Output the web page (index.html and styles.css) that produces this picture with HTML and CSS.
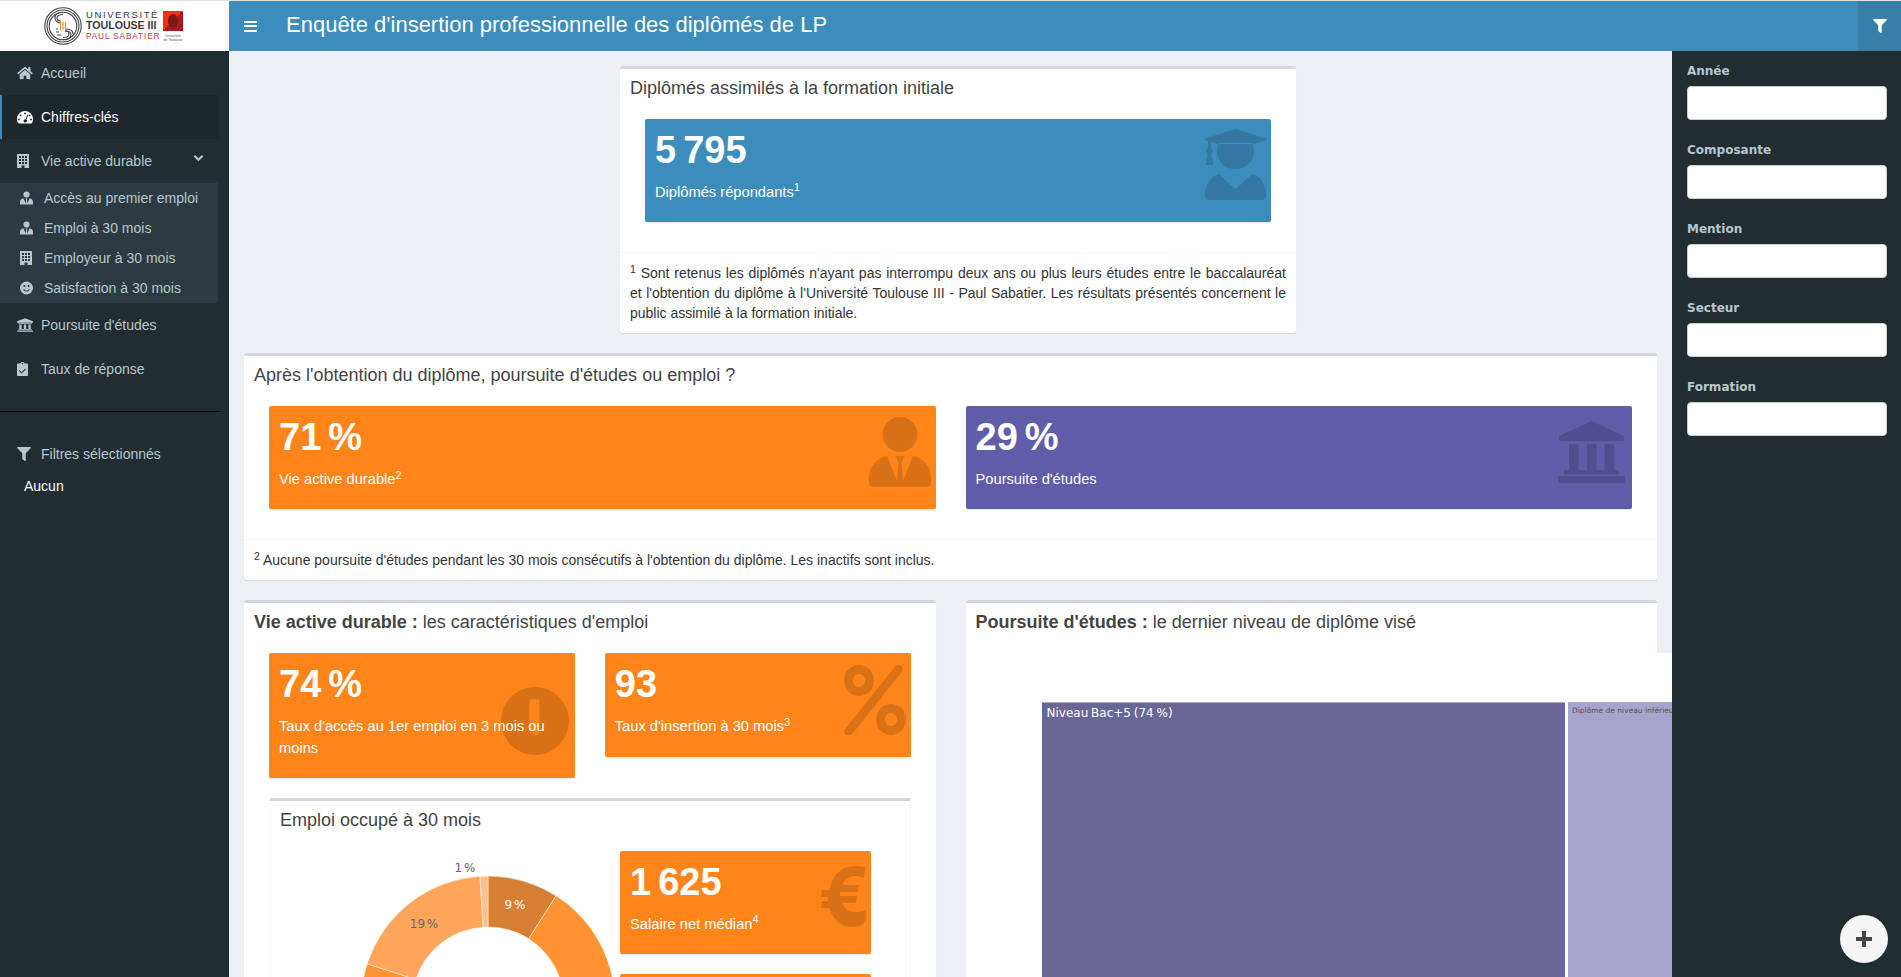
FILE: index.html
```html
<!DOCTYPE html>
<html lang="fr">
<head>
<meta charset="utf-8">
<title>Enquête d'insertion professionnelle</title>
<link rel="stylesheet" href="styles.css">
</head>
<body>
<svg class="defs" width="0" height="0" aria-hidden="true">
  <defs>
    <symbol id="i-home" viewBox="0 0 576 512"><path d="M280.37 148.26L96 300.11V464a16 16 0 0 0 16 16l112.06-.29a16 16 0 0 0 15.92-16V368a16 16 0 0 1 16-16h64a16 16 0 0 1 16 16v95.64a16 16 0 0 0 16 16.05L464 480a16 16 0 0 0 16-16V300L295.67 148.26a12.19 12.19 0 0 0-15.3 0zM571.6 251.47L488 182.56V44.05a12 12 0 0 0-12-12h-56a12 12 0 0 0-12 12v72.61L318.47 43a48 48 0 0 0-61 0L4.34 251.47a12 12 0 0 0-1.6 16.9l25.5 31A12 12 0 0 0 45.15 301l235.22-193.74a12.19 12.19 0 0 1 15.3 0L530.9 301a12 12 0 0 0 16.9-1.6l25.5-31a12 12 0 0 0-1.7-16.93z"/></symbol>
    <symbol id="i-filter" viewBox="0 0 512 512" preserveAspectRatio="xMinYMid"><path d="M487.976 0H24.028C2.71 0-8.047 25.866 7.058 40.971L192 225.941V432c0 7.831 3.821 15.17 10.237 19.662l80 55.98C298.02 518.69 320 507.493 320 487.98V225.941l184.947-184.97C520.021 25.896 509.338 0 487.976 0z"/></symbol>
    <symbol id="i-gauge" viewBox="0 0 16 14"><path fill-rule="evenodd" d="M8 1a8 8 0 0 0-8 8c0 1.6.4 3 1.2 4 .2.3.5.4.8.4h12c.3 0 .6-.1.8-.4.8-1 1.2-2.4 1.2-4a8 8 0 0 0-8-8zM8 2.600a.9.9 0 1 1 0 1.800.9.9 0 0 1 0-1.800zM3.500 4.500a.9.9 0 1 1 0 1.800.9.9 0 0 1 0-1.800zM12.500 4.500a.9.9 0 1 1 0 1.800.9.9 0 0 1 0-1.800zM2 8.500a.9.9 0 1 1 0 1.800.9.9 0 0 1 0-1.800zM14 8.500a.9.9 0 1 1 0 1.800.9.9 0 0 1 0-1.800zM10.400 4.700l.9.400-1.900 4.500a1.700 1.700 0 1 1-.9-.400z"/></symbol>
    <symbol id="i-building" viewBox="0 0 12 14" preserveAspectRatio="xMinYMid"><path fill-rule="evenodd" d="M0 0h12v14H7.500v-2.500h-3V14H0zM2 2v2h2V2zM5 2v2h2V2zM8 2v2h2V2zM2 5v2h2V5zM5 5v2h2V5zM8 5v2h2V5zM2 8v2h2V8zM5 8v2h2V8zM8 8v2h2V8z"/></symbol>
    <symbol id="i-tie" viewBox="0 0 14 14"><circle cx="7" cy="3.300" r="3.300"/><path d="M0 14v-3c0-2 1.500-3.300 3.600-3.700L6.300 13l.2-4-.6-1.500h2.200L7.500 9l.2 4 2.700-5.700C12.500 7.700 14 9 14 11v3z"/></symbol>
    <symbol id="i-smile" viewBox="0 0 14 14"><path fill-rule="evenodd" d="M7 0a7 7 0 1 1 0 14A7 7 0 0 1 7 0zM4.700 3.800a1.100 1.100 0 1 0 0 2.200 1.100 1.100 0 0 0 0-2.200zM9.300 3.800a1.100 1.100 0 1 0 0 2.200 1.100 1.100 0 0 0 0-2.200zM3.500 8.300c.6 1.600 2 2.500 3.500 2.500s2.900-.9 3.500-2.500l-1-.3c-.5 1.100-1.400 1.800-2.500 1.800S5 9.100 4.500 8z"/></symbol>
    <symbol id="i-bank" viewBox="0 0 14 12" preserveAspectRatio="xMinYMid"><path d="M7 0l7 2.800V4H0V2.800zM1 4.400h12v.8H1zM2 5.600h2v3.800H2zM6 5.600h2v3.800H6zM10 5.600h2v3.800h-2zM1 9.800h12v.8H1zM0 11h14v1H0z"/></symbol>
    <symbol id="i-clip" viewBox="0 0 11 14" preserveAspectRatio="xMinYMid"><path fill-rule="evenodd" d="M1 1.500h2.200C3.500.6 4.400 0 5.500 0s2 .6 2.300 1.500H10c.6 0 1 .4 1 1V13c0 .6-.4 1-1 1H1c-.6 0-1-.4-1-1V2.500c0-.6.4-1 1-1zM5.500 1a.8.8 0 1 0 0 1.600.8.8 0 0 0 0-1.600zM8.300 6.500L4.600 10.200 2.700 8.300l-.7.7 2.600 2.600L9 7.200z"/></symbol>
    <symbol id="i-grad" viewBox="0 0 61 71"><path d="M30.500 0L61 9.500v2L48 15V14H13v1l-7-1.800V19c1.300.5 2 1.600 2 2.800 0 1.200-.7 2.300-1.700 2.800L8.500 36h-8l2.200-11.400C1.700 24.100 1 23 1 21.800c0-1.200.7-2.300 2-2.800v-6.800L0 11.500v-2z"/><path d="M13 15h35c.5 2.500.8 5 .8 8 0 9-7 17-18.300 17S12.200 32 12.200 23c0-3 .3-5.500.8-8z"/><path d="M0 66c0-11 6-19 14-21l16.500 15.500L47 45c8 2 14 10 14 21v1c0 2.500-1.500 4-4 4H4c-2.500 0-4-1.500-4-4z"/></symbol>
    <symbol id="i-person" viewBox="0 0 62 70"><ellipse cx="31" cy="17.500" rx="17.500" ry="17.500"/><path d="M18 39l10 25 1.500-18-3-7h9l-3 7L34 64l10-25c10 2 18 10 18 22v5c0 2.500-1.500 4-4 4H4c-2.500 0-4-1.500-4-4v-5c0-12 8-20 18-22z"/></symbol>
    <symbol id="i-bank-lg" viewBox="0 0 67 62"><path d="M33.500 0L66 15v3c0 1-.8 2-1.800 2H2.800c-1 0-1.800-1-1.800-2v-3zM11 23h9.500v26H11zM29 23h9.500v26H29zM46.500 23H56v26h-9.500zM6 49h55v4.500H6zM0 55h67v7H0z"/></symbol>
    <symbol id="i-percent" viewBox="0 0 62 70"><path fill-rule="evenodd" d="M15 0c8.500 0 15 7 15 15.500S23.500 31 15 31 0 24 0 15.500 6.500 0 15 0zM15 9c-3.300 0-6 2.900-6 6.500S11.700 22 15 22s6-2.900 6-6.500S18.300 9 15 9zM47 39c8.500 0 15 7 15 15.500S55.500 70 47 70s-15-7-15-15.500S38.500 39 47 39zM47 48c-3.300 0-6 2.900-6 6.500S43.700 61 47 61s6-2.900 6-6.500S50.300 48 47 48zM54 0c4 0 6 3 4 6.500L10 67c-2 3-4 3-6.500 3-3 0-4.500-3-2.500-6L50 3c1-2 2.500-3 4-3z"/></symbol>
    <symbol id="i-euro" viewBox="0 0 45 61"><path d="M44 1l-1 11c-3-1.500-6-2-9-2-6 0-10.500 3-13 9h17l-1 7H19c0 1 0 2.500.1 4H36l-1 7H21c2.500 6 7 9 13.500 9 3.500 0 7-.7 10-2.300V55c-3 4-7 6-13 6C20 61 12 54 8.500 42H0l1-7h6c-.1-1.500-.1-3-.1-4H0l1-7h7.300C11.500 9 20.500 0 33 0c4 0 8 .3 11 1z"/></symbol>
  </defs>
</svg>

<div class="topline"></div>
<header class="topbar">
  <div class="brand">
    <svg class="seal" viewBox="0 0 38 38" aria-hidden="true">
      <circle cx="19" cy="19" r="18.200" class="ring"/>
      <circle cx="19" cy="19" r="16" class="ring"/>
      <circle cx="19" cy="19" r="13.800" class="ring"/>
      <path class="ring" d="M19 5.200c-5 0-8 2.500-8 5.800s3 5 6 5"/>
      <path class="ring" d="M19 7.500c-3.500 0-6 1.500-6 3.500s2 3 4 3M21 24c3 0 6 1 6 3.500S24 32.800 19 32.800"/>
      <path class="ring" d="M21 22c4 0 8 1.500 8 5M19 30.500c3.500 0 6-1.500 6-3.500s-2-3-4-3"/>
      <path class="ring" d="M12 22h2M12 25h3M13 28h4"/>
      <path class="bars3" d="M16.500 15v8M19 15v8M21.500 15v8"/>
    </svg>
    <div class="brand-text">
      <span class="bt1">UNIVERSITÉ</span>
      <span class="bt2">TOULOUSE III</span>
      <span class="bt3">PAUL SABATIER</span>
    </div>
    <div class="brand-mark">
      <div class="mark-square"><span class="mark-inner"></span></div>
      <span class="mark-text">Université<br>de Toulouse</span>
    </div>
  </div>
  <div class="navbar">
    <button class="burger" aria-label="Menu"><span></span><span></span><span></span></button>
    <h1 class="app-title">Enquête d'insertion professionnelle des diplômés de LP</h1>
    <button class="filter-toggle" aria-label="Filtres"><svg class="ico-filter"><use href="#i-filter"/></svg></button>
  </div>
</header>

<div class="layout">
  <aside class="sidebar">
    <a class="nav-item"><svg class="nav-ico"><use href="#i-home"/></svg>Accueil</a>
    <a class="nav-item active"><svg class="nav-ico"><use href="#i-gauge"/></svg>Chiffres-clés</a>
    <a class="nav-item"><svg class="nav-ico"><use href="#i-building"/></svg>Vie active durable
      <svg class="chev" viewBox="0 0 12 8"><path d="M1.500 1.500L6 6l4.500-4.500"/></svg></a>
    <div class="subnav">
      <a class="sub-item"><svg class="sub-ico"><use href="#i-tie"/></svg>Accès au premier emploi</a>
      <a class="sub-item"><svg class="sub-ico"><use href="#i-tie"/></svg>Emploi à 30 mois</a>
      <a class="sub-item"><svg class="sub-ico"><use href="#i-building"/></svg>Employeur à 30 mois</a>
      <a class="sub-item"><svg class="sub-ico"><use href="#i-smile"/></svg>Satisfaction à 30 mois</a>
    </div>
    <a class="nav-item"><svg class="nav-ico"><use href="#i-bank"/></svg>Poursuite d'études</a>
    <a class="nav-item"><svg class="nav-ico"><use href="#i-clip"/></svg>Taux de réponse</a>
    <hr class="side-rule">
    <div class="nav-item filt"><svg class="nav-ico"><use href="#i-filter"/></svg>Filtres sélectionnés</div>
    <div class="none">Aucun</div>
  </aside>

  <main class="content">
    <section class="box box-intro">
      <h2 class="box-title">Diplômés assimilés à la formation initiale</h2>
      <div class="box-body">
        <div class="vbox blue">
          <p class="num">5 795</p>
          <p class="lab">Diplômés répondants<sup>1</sup></p>
          <svg class="vico grad"><use href="#i-grad"/></svg>
        </div>
      </div>
      <p class="box-foot just"><sup>1</sup> Sont retenus les diplômés n'ayant pas interrompu deux ans ou plus leurs études entre le baccalauréat et l'obtention du diplôme à l'Université Toulouse III - Paul Sabatier. Les résultats présentés concernent le public assimilé à la formation initiale.</p>
    </section>

    <section class="box">
      <h2 class="box-title">Après l'obtention du diplôme, poursuite d'études ou emploi ?</h2>
      <div class="box-body two">
        <div class="vbox orange">
          <p class="num">71 %</p>
          <p class="lab">Vie active durable<sup>2</sup></p>
          <svg class="vico person"><use href="#i-person"/></svg>
        </div>
        <div class="vbox purple">
          <p class="num">29 %</p>
          <p class="lab">Poursuite d'études</p>
          <svg class="vico banklg"><use href="#i-bank-lg"/></svg>
        </div>
      </div>
      <p class="box-foot"><sup>2</sup> Aucune poursuite d'études pendant les 30 mois consécutifs à l'obtention du diplôme. Les inactifs sont inclus.</p>
    </section>

    <div class="cols">
      <section class="box">
        <h2 class="box-title"><b>Vie active durable :</b> les caractéristiques d'emploi</h2>
        <div class="box-body two top">
          <div class="vbox orange">
            <p class="num">74 %</p>
            <p class="lab">Taux d'accès au 1er emploi en 3 mois ou moins</p>
            <svg class="vico clock" viewBox="0 0 68 68"><circle cx="34" cy="34" r="34" class="clock-face"/><path class="clock-hand" d="M28.500 14c0-1 .7-1.500 1.500-1.500h7c.8 0 1.500.5 1.500 1.500v29l-2 4.500c-.7 1-2.300 1-3.500 0l-2.500-3h-2z"/></svg>
          </div>
          <div class="vbox orange">
            <p class="num">93</p>
            <p class="lab">Taux d'insertion à 30 mois<sup>3</sup></p>
            <svg class="vico percent"><use href="#i-percent"/></svg>
          </div>
        </div>
        <section class="inner">
          <h3 class="box-title">Emploi occupé à 30 mois</h3>
          <div class="inner-body">
            <svg class="donut" viewBox="0 0 326 310">
              <path class="s9" d="M194 25A127 127 0 0 1 262.050 44.800L234.700 87.800A76 76 0 0 0 194 76Z"/>
              <path class="s71" d="M262.050 44.800A127 127 0 1 1 73.200 112.800L121.700 128.500A76 76 0 1 0 234.700 87.800Z"/>
              <path class="s19" d="M73.200 112.800A127 127 0 0 1 186 25.300L189.200 76.200A76 76 0 0 0 121.700 128.500Z"/>
              <path class="s1" d="M186 25.300A127 127 0 0 1 194 25L194 76A76 76 0 0 0 189.200 76.200Z"/>
              <text x="171" y="21" class="dl">1 %</text>
              <text x="221" y="58" class="dl dlw">9 %</text>
              <text x="130" y="77" class="dl">19 %</text>
            </svg>
            <div class="inner-vals">
              <div class="vbox orange">
                <p class="num">1 625</p>
                <p class="lab">Salaire net médian<sup>4</sup></p>
                <svg class="vico euro"><use href="#i-euro"/></svg>
              </div>
              <div class="vbox orange">
                <p class="num">88 %</p>
                <p class="lab">Emploi stable</p>
              </div>
            </div>
          </div>
        </section>
      </section>

      <section class="box">
        <h2 class="box-title"><b>Poursuite d'études :</b> le dernier niveau de diplôme visé</h2>
        <div class="chart">
          <div class="cell cell-a">Niveau Bac+5 (74 %)</div>
          <div class="cell cell-b">Diplôme de niveau inférieur</div>
        </div>
      </section>
    </div>
  </main>

  <aside class="filters">
    <label class="flabel" for="f1">Année</label><input class="finput" id="f1">
    <label class="flabel" for="f2">Composante</label><input class="finput" id="f2">
    <label class="flabel" for="f3">Mention</label><input class="finput" id="f3">
    <label class="flabel" for="f4">Secteur</label><input class="finput" id="f4">
    <label class="flabel" for="f5">Formation</label><input class="finput" id="f5">
  </aside>
</div>

<button class="fab" aria-label="Ajouter"><svg viewBox="0 0 18 18"><path d="M7 1h4v6h6v4h-6v6H7v-6H1V7h6z"/></svg></button>
</body>
</html>
```
FILE: styles.css
```css
* { box-sizing: border-box; }
html, body { margin: 0; height: 100%; overflow: hidden; }
body {
  font-family: "Liberation Sans", Arial, sans-serif;
  font-size: 14px;
  line-height: 20px;
  color: #333;
  background: #ecf0f5;
  display: flex;
  flex-direction: column;
  height: 977px;
}
.defs { position: absolute; }
p, h1, h2, h3 { margin: 0; font-weight: 400; }
svg { fill: currentColor; display: block; }
button { border: 0; padding: 0; font: inherit; }

.topline { height: 1px; background: #e2e2e2; flex: none; }
.topbar { display: flex; height: 50px; flex: none; }
.brand {
  width: 229px; flex: none; background: #fff;
  display: flex; align-items: center; padding-left: 44px; gap: 4px;
}
.seal { width: 38px; height: 38px; flex: none; }
.seal .ring { fill: none; stroke: #444; stroke-width: 1.100; }
.seal .bars3 { fill: none; stroke: #f08a2c; stroke-width: 1.200; }
.brand-text { display: flex; flex-direction: column; width: 73px; line-height: 11px; white-space: nowrap; color: #333; }
.bt1 { font-size: 9.500px; letter-spacing: 1.600px; }
.bt2 { font-size: 10.600px; letter-spacing: 0; font-weight: 700; color: #3a3a3a; }
.bt3 { font-size: 8.200px; letter-spacing: .9px; color: #c8323c; line-height: 12px; }
.brand-mark { width: 20px; flex: none; }
.mark-square {
  width: 20px; height: 20px; display: flex; align-items: center; justify-content: center;
  background: linear-gradient(135deg, #f0320a 50%, #b01820 50%);
}
.mark-inner { width: 10px; height: 14px; border-radius: 50%; background: #7c1a1a; }
.mark-text { display: block; font-size: 3.500px; line-height: 4px; color: #555; text-align: center; margin-top: 3px; white-space: nowrap; }

.navbar { flex: 1; background: #3c8dbc; display: flex; align-items: center; color: #fff; padding-left: 15px; }
.burger { width: 13px; height: 11px; background: none; display: flex; flex-direction: column; justify-content: space-between; flex: none; }
.burger span { display: block; height: 2px; background: #fff; }
.app-title { font-size: 22px; line-height: 48px; padding-bottom: 2px; flex: 1; margin-left: 29px; }
.filter-toggle { width: 43px; height: 50px; background: #367fa9; color: #fff; flex: none; display: flex; align-items: center; justify-content: center; }
.ico-filter { width: 14px; height: 14px; }

.layout { flex: 1; display: flex; min-height: 0; }
.sidebar { width: 229px; flex: none; background: #222d32; color: #b8c7ce; }
.nav-item { height: 44px; width: 219px; display: flex; align-items: center; padding-left: 17px; position: relative; }
.nav-item.active { background: #1e282c; color: #fff; border-left: 2px solid #3c8dbc; padding-left: 15px; }
.nav-ico { width: 16px; height: 14px; margin-right: 8px; flex: none; }
.chev { position: absolute; left: 193px; top: 15px; width: 11px; height: 8px; fill: none; stroke: #b8c7ce; stroke-width: 2.200; }
.subnav { width: 218px; height: 120px; background: #2c3b41; }
.sub-item { height: 30px; display: flex; align-items: center; padding-left: 20px; }
.sub-ico { width: 13px; height: 14px; margin-right: 11px; flex: none; }
.side-rule { margin: 20px 0 20px; width: 219px; border: 0; border-top: 1px solid #000; }
.filt { height: 44px; }
.none { color: #fff; padding-left: 24px; line-height: 20px; }

.content { flex: 1; min-width: 0; overflow: hidden; padding: 15px 15px 0; }
.box {
  background: #fff; border-top: 3px solid #d2d6de; border-radius: 3px;
  box-shadow: 0 1px 1px rgba(0,0,0,.1); margin-bottom: 20px;
}
.box-intro { width: 676px; margin-left: 376px; }
.box-title { font-size: 18px; line-height: 20px; padding: 9px 10px 11px; color: #444; }
.box-title b { font-weight: 700; }
.box-body { padding: 10px 25px 10px; }
.box-body.two { display: grid; grid-template-columns: 1fr 1fr; gap: 30px; }
.box-body.two.top { align-items: start; padding-bottom: 0; }
.box-foot { border-top: 1px solid #f4f4f4; padding: 10px; color: #333; }
.just { text-align: justify; }
sup { font-size: 75%; line-height: 0; position: relative; top: -.5em; vertical-align: baseline; }

.vbox {
  position: relative; color: #fff; padding: 11px 10px 9px; border-radius: 2px;
  box-shadow: 0 1px 1px rgba(0,0,0,.1); margin-bottom: 20px;
}
.blue { background: #3c8dbc; }
.orange { background: #ff851b; }
.purple { background: #605ca8; }
.num { font-size: 38px; font-weight: 700; line-height: 41.800px; margin-bottom: 10px; white-space: nowrap; word-spacing: -3.500px; }
.lab { font-size: 14.700px; line-height: 21.430px; margin-bottom: 10px; position: relative; z-index: 1; }
.vico { position: absolute; color: rgba(0,0,0,.15); }
.grad { width: 61px; height: 71px; right: 5px; top: 10px; }
.person { width: 62px; height: 70px; right: 5px; top: 11px; }
.banklg { width: 67px; height: 62px; right: 7px; top: 15px; }
.clock { width: 68px; height: 68px; right: 6px; top: 34px; }
.clock-face { fill: rgba(0,0,0,.15); }
.clock-hand { fill: #ff851b; }
.percent { width: 62px; height: 70px; right: 5px; top: 12px; }
.euro { width: 45px; height: 61px; right: 5px; top: 15px; }

.cols { display: grid; grid-template-columns: minmax(0, 1fr) minmax(0, 1fr); gap: 30px; align-items: start; }
.inner {
  margin: 0 25px; background: #fff; border-top: 3px solid #d2d6de; border-radius: 3px;
  border-left: 1px solid #f4f4f4; border-right: 1px solid #f4f4f4;
}
.inner-body { display: flex; padding: 10px 39px 0 24px; }
.donut { width: 326px; height: 310px; flex: none; overflow: visible; }
.s9 { fill: #d67f33; stroke: #fff; stroke-width: .5; }
.s71 { fill: #ff9233; stroke: #fff; stroke-width: .5; }
.s19 { fill: #ffa65c; stroke: #fff; stroke-width: .5; }
.s1 { fill: #ffc08a; stroke: #fff; stroke-width: .5; }
.dl { font-family: "DejaVu Sans", sans-serif; font-size: 12px; text-anchor: middle; fill: #666; word-spacing: -2px; }
.dlw { fill: #fff; }
.inner-vals { flex: 1; min-width: 0; }

.chart {
  width: 900px; height: 500px; background: #fff; margin-top: 10px;
  display: flex; align-items: flex-start; padding: 49px 0 0 76px;
}
.cell { height: 400px; flex: none; border-top: 1px solid #aaa8cc; font-family: "DejaVu Sans", sans-serif; }
.cell-a { width: 523px; background: #696796; color: #fff; font-size: 12px; line-height: 20px; padding-left: 5px; word-spacing: -1px; }
.cell-b { width: 300px; margin-left: 3.500px; background: #a7a4cf; color: #555; font-size: 7.500px; line-height: 15px; padding: 0 0 0 4px; }

.filters { width: 229px; flex: none; background: #222d32; padding: 10px 14px 0 15px; position: relative; z-index: 2; }
.flabel {
  display: block; font-family: "DejaVu Sans", sans-serif; font-weight: 700; font-size: 12px;
  line-height: 20px; margin-bottom: 5px; color: #b8c7ce;
}
.finput {
  display: block; width: 200px; height: 34px; margin-bottom: 20px;
  border: 1px solid #ccc; border-radius: 4px; background: #fff;
}
.fab {
  position: fixed; left: 1840px; top: 915px; width: 48px; height: 48px; border-radius: 50%;
  background: #f5f5f5; color: #444; display: flex; align-items: center; justify-content: center; z-index: 5;
}
.fab svg { width: 18px; height: 18px; }
```
